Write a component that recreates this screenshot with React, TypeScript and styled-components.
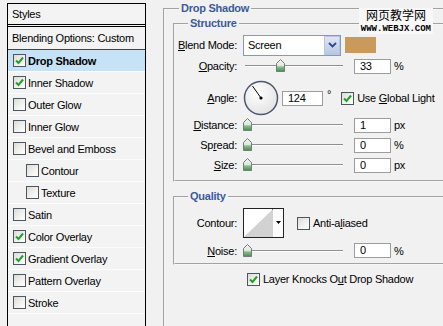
import styled, { createGlobalStyle } from 'styled-components';

const GlobalStyle = createGlobalStyle`
  html, body {
    margin: 0;
    padding: 0;
    background: #f1f1f1;
  }
  body {
    font-family: 'Liberation Sans', Arial, sans-serif;
    font-size: 11px;
    letter-spacing: -0.25px;
    color: #000;
  }
`;

const STYLES = [
  { name: 'Drop Shadow', checked: true, active: true },
  { name: 'Inner Shadow', checked: true },
  { name: 'Outer Glow' },
  { name: 'Inner Glow' },
  { name: 'Bevel and Emboss' },
  { name: 'Contour', sub: true },
  { name: 'Texture', sub: true },
  { name: 'Satin' },
  { name: 'Color Overlay', checked: true },
  { name: 'Gradient Overlay', checked: true },
  { name: 'Pattern Overlay' },
  { name: 'Stroke' },
];

const CheckBox = ({ checked }: { checked?: boolean }) => (
  <Box>
    {checked && (
      <svg width="11" height="11" viewBox="0 0 11 11">
        <path d="M2 5.5 L4.5 8 L9 2.5" fill="none" stroke="#23a02a" strokeWidth="2" />
      </svg>
    )}
  </Box>
);

const Thumb = () => (
  <svg width="9" height="13" viewBox="0 0 9 13">
    <defs>
      <linearGradient id="thumbFill" x1="0" y1="0" x2="0" y2="1">
        <stop offset="0" stopColor="#f4f4f4" />
        <stop offset="0.5" stopColor="#dfe8df" />
        <stop offset="0.62" stopColor="#8cbc8e" />
        <stop offset="1" stopColor="#4a8a58" />
      </linearGradient>
    </defs>
    <path d="M4.5 0.5 L8.5 4.5 L8.5 12.5 L0.5 12.5 L0.5 4.5 Z" fill="url(#thumbFill)" stroke="#6f7f72" />
  </svg>
);

const Slider = ({ value }: { value: number }) => (
  <SliderBox>
    <ThumbSpot style={{ left: `${value * 0.92}px` }}>
      <Thumb />
    </ThumbSpot>
  </SliderBox>
);

const Dial = () => (
  <svg width="36" height="36" viewBox="0 0 36 36">
    <defs>
      <radialGradient id="dialFill" cx="0.4" cy="0.35" r="0.7">
        <stop offset="0" stopColor="#ffffff" />
        <stop offset="1" stopColor="#e2e2e2" />
      </radialGradient>
    </defs>
    <circle cx="18" cy="18" r="16.5" fill="url(#dialFill)" stroke="#4f5872" strokeWidth="1.5" />
    <line x1="18" y1="18" x2="9.5" y2="6" stroke="#000" strokeWidth="1" />
    <circle cx="18" cy="18" r="1.6" fill="#000" />
  </svg>
);

const App = () => {
  return (
    <Page>
      <GlobalStyle />
      <StylesPanel>
        <PanelHeader>Styles</PanelHeader>
        <BlendingRow>Blending Options: Custom</BlendingRow>
        {STYLES.map((s) => (
          <StyleRow key={s.name} $active={s.active} $sub={s.sub}>
            <CheckBox checked={s.checked} />
            <StyleName $bold={s.active}>{s.name}</StyleName>
          </StyleRow>
        ))}
      </StylesPanel>

      <RightArea>
        <OuterGroup>
          <Legend $ml={6}>Drop Shadow</Legend>
          <InnerGroup>
            <Legend $ml={13}>Structure</Legend>
            <Row $h={22}>
              <Label>
                <u>B</u>lend Mode:
              </Label>
              <Select>
                <SelectText>Screen</SelectText>
                <SelectButton>
                  <svg width="9" height="6" viewBox="0 0 9 6">
                    <path d="M1 1 L4.5 4.5 L8 1" fill="none" stroke="#2b4a8a" strokeWidth="1.8" />
                  </svg>
                </SelectButton>
              </Select>
              <Swatch />
            </Row>
            <Row $h={20}>
              <Label>
                <u>O</u>pacity:
              </Label>
              <Slider value={36} />
              <NumInput>33</NumInput>
              <Unit>%</Unit>
            </Row>
            <Row $h={36} $mt={4}>
              <Label>
                <u>A</u>ngle:
              </Label>
              <DialWrap>
                <Dial />
              </DialWrap>
              <NumInput $w={41}>124</NumInput>
              <Degree>°</Degree>
              <CheckSpot $ml={10}>
                <CheckBox checked />
              </CheckSpot>
              <CheckText>
                Use <u>G</u>lobal Light
              </CheckText>
            </Row>
            <Row $h={20} $mt={-1}>
              <Label>
                <u>D</u>istance:
              </Label>
              <Slider value={0} />
              <NumInput>1</NumInput>
              <Unit>px</Unit>
            </Row>
            <Row $h={20}>
              <Label>
                Sp<u>r</u>ead:
              </Label>
              <Slider value={0} />
              <NumInput>0</NumInput>
              <Unit>%</Unit>
            </Row>
            <Row $h={20}>
              <Label>
                <u>S</u>ize:
              </Label>
              <Slider value={0} />
              <NumInput>0</NumInput>
              <Unit>px</Unit>
            </Row>
          </InnerGroup>

          <InnerGroup $mt={8} $pt={5} $pb={3}>
            <Legend $ml={13}>Quality</Legend>
            <Row $h={30}>
              <Label>Contour:</Label>
              <ContourBox>
                <CurveArea>
                  <svg width="29" height="28" viewBox="0 0 29 28">
                    <path d="M0 28 L29 0 L29 28 Z" fill="#d2d2d2" />
                  </svg>
                </CurveArea>
                <CurveButton>
                  <svg width="5" height="3" viewBox="0 0 5 3">
                    <path d="M0 0 L5 0 L2.5 3 Z" fill="#000" />
                  </svg>
                </CurveButton>
              </ContourBox>
              <CheckSpot $ml={13}>
                <CheckBox />
              </CheckSpot>
              <CheckText>
                Anti-a<u>l</u>iased
              </CheckText>
            </Row>
            <Row $h={19} $mt={3}>
              <Label>
                <u>N</u>oise:
              </Label>
              <Slider value={0} />
              <NumInput>0</NumInput>
              <Unit>%</Unit>
            </Row>
          </InnerGroup>

          <KnockRow>
            <CheckBox checked />
            <CheckText>
              Layer Knocks O<u>u</u>t Drop Shadow
            </CheckText>
          </KnockRow>
        </OuterGroup>
      </RightArea>

      <Watermark>
        <WatermarkCn>网页教学网</WatermarkCn>
        <WatermarkUrl>WWW.WEBJX.COM</WatermarkUrl>
      </Watermark>
    </Page>
  );
};

export default App;

const Page = styled.div`
  position: relative;
  display: flex;
  width: 443px;
  height: 326px;
  overflow: hidden;
  background: #f1f1f1;
`;

const StylesPanel = styled.div`
  flex-shrink: 0;
  width: 137px;
  margin: 3px 0 0 7px;
  border: 1px solid #000;
  border-bottom: none;
  background: #f3f3f3;
`;

const PanelHeader = styled.div`
  height: 20px;
  line-height: 20px;
  padding-left: 4px;
  border-bottom: 3px double #000;
`;

const BlendingRow = styled.div`
  height: 22px;
  line-height: 22px;
  padding-left: 4px;
  border-bottom: 1px solid #444;
`;

const StyleRow = styled.div<{ $active?: boolean; $sub?: boolean }>`
  display: flex;
  align-items: center;
  gap: 2px;
  height: 21px;
  padding-left: ${(p) => (p.$sub ? 18 : 5)}px;
  border-bottom: 1px solid #fcfcfc;
  background: ${(p) => (p.$active ? '#c5e2f6' : 'transparent')};
`;

const StyleName = styled.span<{ $bold?: boolean }>`
  font-weight: ${(p) => (p.$bold ? 'bold' : 'normal')};
`;

const Box = styled.span`
  display: inline-flex;
  align-items: center;
  justify-content: center;
  flex-shrink: 0;
  width: 13px;
  height: 13px;
  box-sizing: border-box;
  border: 1px solid #4b5563;
  background: linear-gradient(135deg, #dcdcd6 0%, #f6f6f4 70%, #ffffff 100%);
`;

const RightArea = styled.div`
  flex: 1;
  min-width: 0;
  padding: 2px 0 0 17px;
`;

const OuterGroup = styled.fieldset`
  margin: 0;
  padding: 2px 0 0 8px;
  width: 330px;
  height: 340px;
  border: 2px groove #f6f6f6;
`;

const Legend = styled.legend<{ $ml: number }>`
  margin-left: ${(p) => p.$ml}px;
  padding: 0 2px;
  line-height: 13px;
  font-weight: bold;
  color: #3a5b99;
`;

const InnerGroup = styled.fieldset<{ $mt?: number; $pt?: number; $pb?: number }>`
  margin: ${(p) => p.$mt ?? 0}px 0 0 0;
  padding: ${(p) => p.$pt ?? 4}px 0 ${(p) => p.$pb ?? 5}px 0;
  width: 320px;
  border: 2px groove #f6f6f6;
`;

const Row = styled.div<{ $h: number; $mt?: number }>`
  display: flex;
  align-items: center;
  height: ${(p) => p.$h}px;
  margin-top: ${(p) => p.$mt ?? 0}px;
`;

const Label = styled.span`
  flex-shrink: 0;
  width: 62px;
  margin-right: 6px;
  text-align: right;
  white-space: nowrap;
`;

const Select = styled.div`
  display: flex;
  width: 98px;
  height: 21px;
  box-sizing: border-box;
  border: 1px solid #7f9db9;
  background: #fff;
`;

const SelectText = styled.span`
  flex: 1;
  padding-left: 4px;
  line-height: 19px;
`;

const SelectButton = styled.span`
  display: flex;
  align-items: center;
  justify-content: center;
  width: 16px;
  box-sizing: border-box;
  border: 1px solid #b7c6e6;
  background: linear-gradient(#dfe6f4, #b9c7e2);
`;

const Swatch = styled.span`
  width: 31px;
  height: 16px;
  margin-left: 4px;
  background: #c99a5c;
`;

const SliderBox = styled.div`
  position: relative;
  width: 100px;
  height: 14px;
  margin-right: 11px;

  &::before {
    content: '';
    position: absolute;
    left: 2px;
    right: 0;
    top: 6px;
    border-top: 1px solid #8f8f8f;
    border-bottom: 1px solid #ffffff;
  }
`;

const ThumbSpot = styled.span`
  position: absolute;
  top: 0;
  line-height: 0;
`;

const NumInput = styled.span<{ $w?: number }>`
  width: ${(p) => p.$w ?? 37}px;
  height: 15px;
  box-sizing: border-box;
  padding-left: 5px;
  line-height: 13px;
  border: 1px solid #9c9c9c;
  background: #fff;
`;

const Unit = styled.span`
  margin-left: 3px;
`;

const DialWrap = styled.span`
  display: flex;
  margin-right: 3px;
`;

const Degree = styled.span`
  margin: -8px 0 0 4px;
`;

const CheckSpot = styled.span<{ $ml: number }>`
  display: flex;
  margin-left: ${(p) => p.$ml}px;
`;

const CheckText = styled.span`
  margin-left: 3px;
  white-space: nowrap;
`;

const ContourBox = styled.div`
  display: flex;
  height: 30px;
`;

const CurveArea = styled.div`
  width: 30px;
  box-sizing: border-box;
  border: 1px solid #222;
  background: #fff;
  line-height: 0;
`;

const CurveButton = styled.div`
  display: flex;
  justify-content: center;
  padding-top: 12px;
  width: 11px;
  box-sizing: border-box;
  border: 1px solid #222;
  border-left: none;
  background: #fbfbfb;
`;

const KnockRow = styled.div`
  display: flex;
  align-items: center;
  height: 14px;
  margin: 7px 0 0 74px;
`;

const Watermark = styled.div`
  position: absolute;
  top: 8px;
  right: 10px;
  padding: 0 2px 1px;
  text-align: center;
  background: #f8f8f8;
`;

const WatermarkCn = styled.div`
  font-family: 'Noto Sans CJK SC', sans-serif;
  font-size: 12px;
  line-height: 14px;
  letter-spacing: 0;
`;

const WatermarkUrl = styled.div`
  margin-top: 3px;
  font-family: 'Liberation Mono', monospace;
  font-weight: bold;
  font-size: 9px;
  line-height: 8px;
  letter-spacing: 0;
`;
